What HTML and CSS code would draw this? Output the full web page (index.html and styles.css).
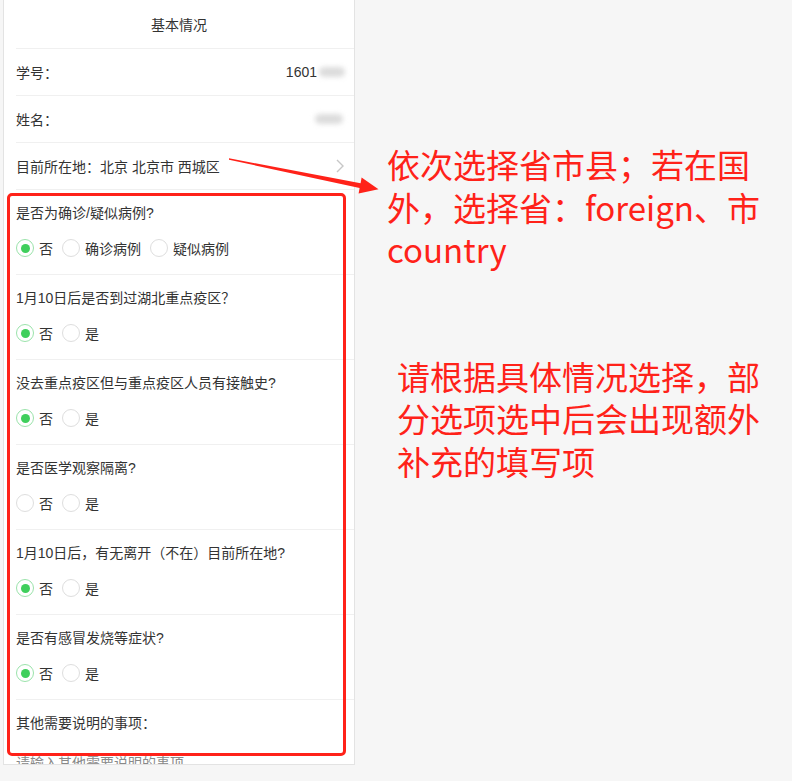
FILE: index.html
```html
<!DOCTYPE html>
<html lang="zh-CN">
<head>
    <meta charset="UTF-8">
    <meta name="viewport" content="width=device-width, initial-scale=1.0">
    <title>基本情况</title>
    <link rel="stylesheet" href="styles.css">
</head>
<body>
    <div class="stage">
        <div class="card">
            <div class="card-title">基本情况</div>
            <div class="cell">
                <span class="cell-label">学号：</span>
                <span class="cell-value">1601<span class="smudge"></span></span>
            </div>
            <div class="cell">
                <span class="cell-label">姓名：</span>
                <span class="cell-value"><span class="smudge smudge-name"></span></span>
            </div>
            <div class="cell">
                <span class="cell-label">目前所在地：北京 北京市 西城区</span>
                <svg class="chevron" width="8" height="14" viewBox="0 0 8 14"><polyline points="1,1 7,7 1,13" fill="none" stroke="#c7c7c7" stroke-width="1.4"/></svg>
            </div>

            <div class="question">
                <div class="q-title">是否为确诊/疑似病例?</div>
                <div class="options">
                    <label class="opt"><span class="radio checked"></span>否</label>
                    <label class="opt"><span class="radio"></span>确诊病例</label>
                    <label class="opt"><span class="radio"></span>疑似病例</label>
                </div>
            </div>
            <div class="question">
                <div class="q-title">1月10日后是否到过湖北重点疫区？</div>
                <div class="options">
                    <label class="opt"><span class="radio checked"></span>否</label>
                    <label class="opt"><span class="radio"></span>是</label>
                </div>
            </div>
            <div class="question">
                <div class="q-title">没去重点疫区但与重点疫区人员有接触史?</div>
                <div class="options">
                    <label class="opt"><span class="radio checked"></span>否</label>
                    <label class="opt"><span class="radio"></span>是</label>
                </div>
            </div>
            <div class="question">
                <div class="q-title">是否医学观察隔离?</div>
                <div class="options">
                    <label class="opt"><span class="radio"></span>否</label>
                    <label class="opt"><span class="radio"></span>是</label>
                </div>
            </div>
            <div class="question">
                <div class="q-title">1月10日后，有无离开（不在）目前所在地?</div>
                <div class="options">
                    <label class="opt"><span class="radio checked"></span>否</label>
                    <label class="opt"><span class="radio"></span>是</label>
                </div>
            </div>
            <div class="question">
                <div class="q-title">是否有感冒发烧等症状?</div>
                <div class="options">
                    <label class="opt"><span class="radio checked"></span>否</label>
                    <label class="opt"><span class="radio"></span>是</label>
                </div>
            </div>
            <div class="question last">
                <div class="q-title">其他需要说明的事项：</div>
                <div class="placeholder">请输入其他需要说明的事项</div>
            </div>
        </div>

        <div class="notes">
            <p class="note">依次选择省市县；若在国<br>外，选择省：foreign、市<br>country</p>
            <p class="note note-second">请根据具体情况选择，部<br>分选项选中后会出现额外<br>补充的填写项</p>
        </div>

        <!-- annotation overlay -->
        <div class="mark-box"></div>
        <svg class="arrow" width="792" height="781" viewBox="0 0 792 781">
            <polygon fill="#ff2219" points="229,158.3 360.6,183.2 361.6,177.4 378.5,189.3 358.6,193.6 359.6,188.1 229,159.7"/>
        </svg>
    </div>
</body>
</html>
```

FILE: styles.css
```css
body {
    margin: 0;
    background-color: #f6f6f6;
    font-family: "Liberation Sans", Arial, "Noto Sans CJK SC", sans-serif;
    color: #333;
}
.stage {
    position: relative;
    width: 792px;
    height: 781px;
    display: flex;
    align-items: flex-start;
    overflow: hidden;
}
.card {
    margin-left: 3px;
    width: 352px;
    height: 765px;
    box-sizing: border-box;
    background-color: #fff;
    border: 1px solid #e3e3e3;
    border-top: none;
    overflow: hidden;
    font-size: 14px;
}
.card-title {
    height: 48px;
    line-height: 50px;
    text-align: center;
    margin-left: 12px;
    padding-right: 12px;
    border-bottom: 1px solid #f0f0f0;
}
.cell {
    display: flex;
    align-items: center;
    justify-content: space-between;
    height: 46px;
    margin-left: 12px;
    padding-right: 9px;
    border-bottom: 1px solid #f0f0f0;
}
.cell-value {
    display: flex;
    align-items: center;
}
.smudge {
    display: inline-block;
    width: 26px;
    height: 10px;
    margin-left: 2px;
    background-color: #dcdcdc;
    border-radius: 5px;
    filter: blur(2.5px);
}
.smudge-name {
    width: 28px;
    margin-right: 2px;
}
.chevron {
    margin-right: 1px;
}
.question {
    height: 85px;
    box-sizing: border-box;
    margin-left: 12px;
    padding-top: 14px;
    border-bottom: 1px solid #f0f0f0;
}
.q-title {
    height: 18px;
    line-height: 18px;
}
.options {
    display: flex;
    align-items: center;
    height: 24px;
    margin-top: 14px;
}
.opt {
    display: flex;
    align-items: center;
    margin-right: 9px;
}
.radio {
    width: 18px;
    height: 18px;
    box-sizing: border-box;
    border: 1px solid #dedede;
    border-radius: 50%;
    margin-right: 5px;
    position: relative;
}
.radio.checked {
    border-color: #9be3ab;
}
.radio.checked::after {
    content: "";
    position: absolute;
    left: 3.5px;
    top: 3.5px;
    width: 9px;
    height: 9px;
    border-radius: 50%;
    background-color: #3fcf5c;
}
.question.last {
    height: auto;
    border-bottom: none;
}
.placeholder {
    margin-top: 20px;
    color: #888;
}
.notes {
    margin-left: 32px;
    padding-top: 143px;
    font-family: "Noto Sans CJK SC", sans-serif;
    font-size: 33px;
    line-height: 42.5px;
    color: #ff2219;
    white-space: nowrap;
}
.note {
    margin: 0;
}
.note-second {
    margin-top: 84px;
    margin-left: 10px;
}
.mark-box {
    position: absolute;
    left: 7px;
    top: 193px;
    width: 339px;
    height: 563px;
    box-sizing: border-box;
    border: 3px solid #ff2219;
    border-radius: 5px;
}
.arrow {
    position: absolute;
    left: 0;
    top: 0;
    pointer-events: none;
}
```
